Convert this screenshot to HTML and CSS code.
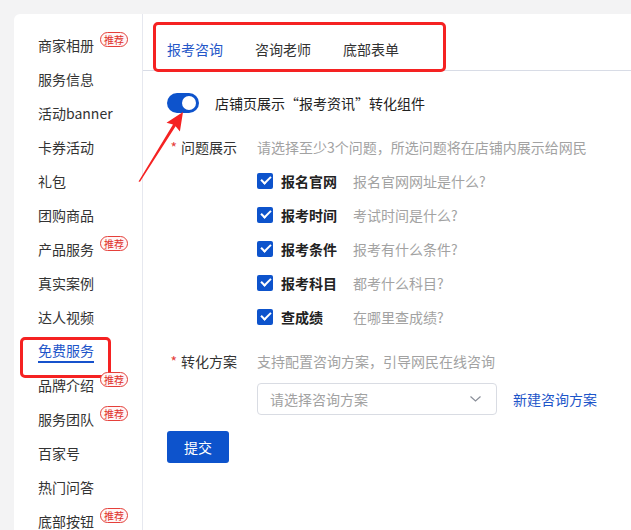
FILE: index.html
```html
<!DOCTYPE html>
<html lang="zh-CN">
<head>
	<meta charset="UTF-8">
	<title>报考咨询</title>
	<link rel="stylesheet" href="styles.css">
</head>
<body>
	<section class="card">
		<aside class="side">
			<ul class="menu">
				<li><span>商家相册</span><em class="tag">推荐</em></li>
				<li><span>服务信息</span></li>
				<li><span>活动banner</span></li>
				<li><span>卡券活动</span></li>
				<li><span>礼包</span></li>
				<li><span>团购商品</span></li>
				<li><span>产品服务</span><em class="tag">推荐</em></li>
				<li><span>真实案例</span></li>
				<li><span>达人视频</span></li>
				<li class="active"><span>免费服务</span></li>
				<li><span>品牌介绍</span><em class="tag">推荐</em></li>
				<li><span>服务团队</span><em class="tag">推荐</em></li>
				<li><span>百家号</span></li>
				<li><span>热门问答</span></li>
				<li><span>底部按钮</span><em class="tag">推荐</em></li>
			</ul>
		</aside>

		<section class="main">
			<nav class="tabs">
				<a href="javascript:;" class="cur">报考咨询</a>
				<a href="javascript:;">咨询老师</a>
				<a href="javascript:;">底部表单</a>
			</nav>

			<div class="form">
				<div class="switchRow">
					<span class="switch"></span>
					<span>店铺页展示“报考资讯”转化组件</span>
				</div>

				<div class="row">
					<label class="lbl"><i>*</i>问题展示</label>
					<span class="tip">请选择至少3个问题，所选问题将在店铺内展示给网民</span>
				</div>
				<ul class="checks">
					<li><span class="box"></span><b>报名官网</b><span class="tip">报名官网网址是什么?</span></li>
					<li><span class="box"></span><b>报考时间</b><span class="tip">考试时间是什么?</span></li>
					<li><span class="box"></span><b>报考条件</b><span class="tip">报考有什么条件?</span></li>
					<li><span class="box"></span><b>报考科目</b><span class="tip">都考什么科目?</span></li>
					<li><span class="box"></span><b>查成绩</b><span class="tip">在哪里查成绩?</span></li>
				</ul>

				<div class="row row2">
					<label class="lbl"><i>*</i>转化方案</label>
					<span class="tip">支持配置咨询方案，引导网民在线咨询</span>
				</div>
				<div class="pick">
					<div class="select">
						<span>请选择咨询方案</span>
						<svg width="11" height="6" viewBox="0 0 11 6"><path d="M0.5 0.5 L5.5 5 L10.5 0.5" fill="none" stroke="#8a8f99" stroke-width="1.2"/></svg>
					</div>
					<a href="javascript:;" class="newLink">新建咨询方案</a>
				</div>

				<button class="btn">提交</button>
			</div>
		</section>
	</section>

	<!--标注箭头-->
	<svg class="arrow" width="54" height="78" viewBox="134 108 54 78">
		<polygon points="183,112 166.5,122.7 173,124.6 138.5,181.5 140,181.8 175.6,126.2 179.9,131.5" fill="#f52222"/>
	</svg>
</body>
</html>
```

FILE: styles.css
```css
body{
	margin:0;
	height:530px;
	overflow:hidden;
	background:#f3f3f4;
	font-family:"Noto Sans CJK SC","Liberation Sans",sans-serif;
	font-size:14px;
	color:#333;
}
ul,li{
	margin:0;
	padding:0;
	list-style:none;
}
a{
	text-decoration:none;
}
.card{
	display:flex;
	margin:14px 0 0 14px;
	height:516px;
	background:#fff;
	border-radius:6px 0 0 0;
}
.side{
	flex:none;
	width:129px;
	box-sizing:border-box;
	border-right:1px solid #e6e8ef;
}
.menu{
	padding:14px 0 0 24px;
}
.menu li{
	position:relative;
	display:flex;
	align-items:center;
	height:34px;
	color:#333;
}
.menu li span{
	line-height:22px;
}
.tag{
	align-self:flex-start;
	margin:4px 0 0 6px;
	padding:0 3px;
	font-style:normal;
	font-size:10px;
	line-height:13px;
	color:#e0302a;
	background:#fff6f6;
	border:1px solid #e5403a;
	border-radius:8px;
}
.menu .active span{
	color:#1d55c9;
	border-bottom:2px solid #1652cc;
}
.menu .active:after{
	content:"";
	position:absolute;
	left:-18px;
	top:3px;
	width:91px;
	height:41px;
	box-sizing:border-box;
	border:3px solid #f52222;
	border-radius:5px;
}
.main{
	flex:1;
}
.tabs{
	position:relative;
	display:flex;
	gap:32px;
	height:32px;
	padding:24px 0 0 24px;
	border-bottom:1px solid #d8dce6;
}
.tabs a{
	line-height:22px;
	color:#333;
}
.tabs a.cur{
	color:#2456c8;
}
.tabs:after{
	content:"";
	position:absolute;
	left:10px;
	top:8px;
	width:293px;
	height:50px;
	box-sizing:border-box;
	border:3px solid #f52222;
	border-radius:5px;
}
.form{
	padding:22px 0 0 24px;
}
.switchRow{
	display:flex;
	align-items:center;
	gap:16px;
	height:20px;
	margin-bottom:17px;
	color:#222;
}
.switch{
	position:relative;
	width:32px;
	height:20px;
	border-radius:10px;
	background:#0d53cc;
}
.switch:after{
	content:"";
	position:absolute;
	right:3px;
	top:3px;
	width:14px;
	height:14px;
	border-radius:50%;
	background:#fff;
}
.row{
	display:flex;
	align-items:center;
	height:34px;
}
.row2{
	margin-top:10px;
}
.lbl{
	width:90px;
	padding-right:20px;
	box-sizing:border-box;
	text-align:right;
	color:#333;
}
.lbl i{
	font-style:normal;
	color:#e5403a;
	margin-right:4px;
}
.tip{
	color:#a2a2a2;
}
.checks li{
	display:flex;
	align-items:center;
	height:34px;
	padding-left:90px;
}
.box{
	position:relative;
	width:16px;
	height:16px;
	margin-right:8px;
	border-radius:2px;
	background:#0d53cc;
}
.box:after{
	content:"";
	position:absolute;
	left:4px;
	top:3px;
	width:8px;
	height:4px;
	border-left:2px solid #fff;
	border-bottom:2px solid #fff;
	transform:rotate(-45deg);
}
.checks b{
	width:72px;
	color:#222;
}
.pick{
	display:flex;
	align-items:center;
	margin-top:5px;
	padding-left:90px;
}
.select{
	display:flex;
	align-items:center;
	justify-content:space-between;
	width:240px;
	height:32px;
	box-sizing:border-box;
	padding:0 15px 0 12px;
	border:1px solid #d9dce3;
	border-radius:4px;
	color:#a2a2a2;
}
.newLink{
	margin-left:16px;
	color:#1d55c9;
}
.btn{
	display:block;
	margin-top:16px;
	width:62px;
	height:32px;
	border:0;
	border-radius:3px;
	background:#0d53cc;
	color:#fff;
	font-family:inherit;
	font-size:14px;
	cursor:pointer;
}
.arrow{
	position:absolute;
	left:134px;
	top:108px;
}
```
